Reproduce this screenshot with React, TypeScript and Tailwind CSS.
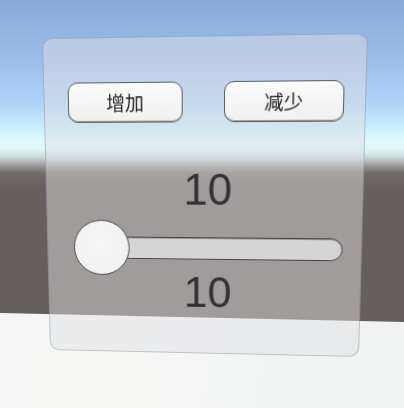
import React from "react";

export default function App() {
  return (
    <div className="relative w-[404px] h-[408px] overflow-hidden bg-[linear-gradient(to_bottom,#89aad9_0px,#9cbeea_60px,#aed3f7_102px,#c4eafc_124px,#e0fbfd_142px,#dff6f6_150px,#c6d4d4_158px,#9a9696_166px,#736b67_173px,#675f5b_190px,#675f5b_100%)] font-['Liberation_Sans','Noto_Sans_CJK_SC',sans-serif]">
      <div className="absolute inset-0 [clip-path:polygon(0_313px,100%_322px,100%_100%,0_100%)] bg-[linear-gradient(100deg,#f3f5f5_0%,#f8f8f5_35%,#f3f5f5_70%,#f1f3f3_100%)]" />
      <div className="absolute left-0 top-0 w-[320px] h-[320px] origin-top-left [transform:matrix3d(0.974819,-0.019565,0,-0.00011938,0.033422,1.033956,0,0.00016845,0,0,1,0,42,38,0,1)] rounded-[10px] border border-[rgba(95,110,135,0.35)] bg-[rgba(224,224,228,0.47)] flex flex-col">
        <div className="flex justify-between pt-[43px] pl-[24px] pr-[20px]">
          <button className="w-[116px] h-[40px] rounded-[10px] border-[1.5px] border-[#5e5e5e] bg-[linear-gradient(to_bottom,#fbfbfb,#f0f0f0)] shadow-[inset_0_-1px_0_#a0a0a0] flex items-center justify-center text-[19px] text-[#222] font-['Noto_Sans_CJK_SC',sans-serif]">
            增加
          </button>
          <button className="w-[117px] h-[40px] rounded-[10px] border-[1.5px] border-[#5e5e5e] bg-[linear-gradient(to_bottom,#fbfbfb,#f0f0f0)] shadow-[inset_0_-1px_0_#a0a0a0] flex items-center justify-center text-[19px] text-[#222] font-['Noto_Sans_CJK_SC',sans-serif]">
            减少
          </button>
        </div>
        <div className="mt-[45px] h-[44px] pl-[12px] text-center text-[44px] leading-[44px] text-[#323232]">
          10
        </div>
        <div className="relative mt-[10px] h-[55px]">
          <div className="absolute left-[46px] top-[16px] w-[254px] h-[23px] rounded-full border border-[#454545] bg-[#d5d5d5] shadow-[inset_0_1px_0_#9a9a9a]" />
          <div className="absolute left-[27px] top-[-1px] w-[58px] h-[57px] rounded-full border-[1.5px] border-[#4a4a4a] bg-[radial-gradient(circle_at_50%_40%,#f7f7f7,#efefef)]" />
        </div>
        <div className="-mt-[4px] h-[44px] pl-[12px] text-center text-[44px] leading-[44px] text-[#323232]">
          10
        </div>
      </div>
    </div>
  );
}
